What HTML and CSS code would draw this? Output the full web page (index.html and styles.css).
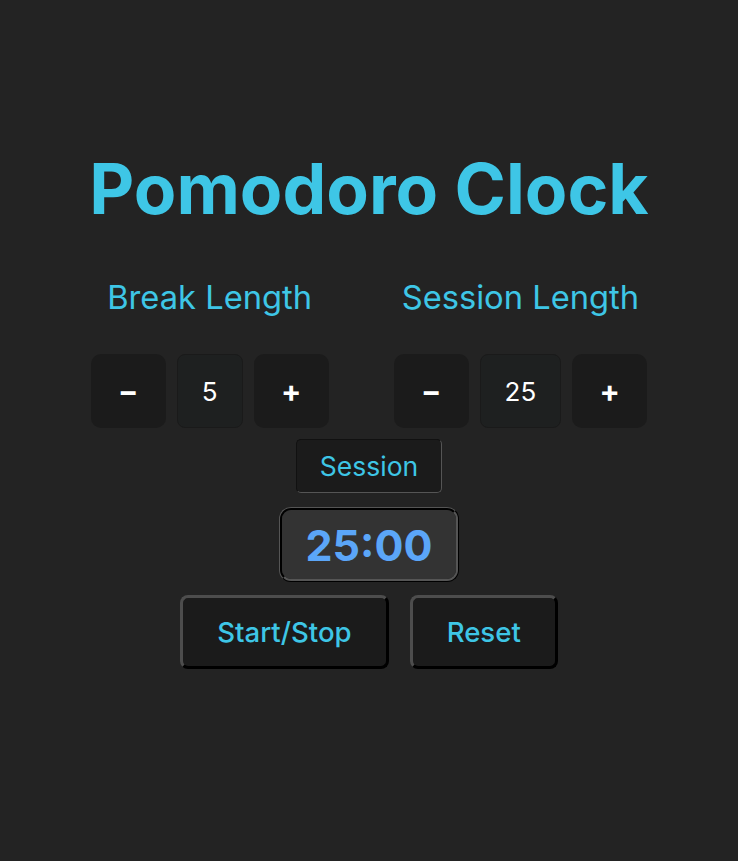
FILE: index.html
```html
<!DOCTYPE html>
<html lang="en">
<head>
<meta charset="utf-8">
<title>Pomodoro Clock</title>
<link rel="stylesheet" href="styles.css">
</head>
<body>
<main class="app">
  <h1 class="title">Pomodoro Clock</h1>
  <section class="settings">
    <div class="setting">
      <h2 class="setting-label">Break Length</h2>
      <div class="controls">
        <button class="step">&minus;</button>
        <div class="value">5</div>
        <button class="step">+</button>
      </div>
    </div>
    <div class="setting">
      <h2 class="setting-label">Session Length</h2>
      <div class="controls">
        <button class="step">&minus;</button>
        <div class="value">25</div>
        <button class="step">+</button>
      </div>
    </div>
  </section>
  <div class="mode">Session</div>
  <div class="timer">25:00</div>
  <div class="actions">
    <button class="action">Start/Stop</button>
    <button class="action">Reset</button>
  </div>
</main>
</body>
</html>
```
FILE: styles.css
```css
html, body {
  margin: 0;
  padding: 0;
  background: #232323;
}
body {
  font-family: Inter, "Noto Sans", sans-serif;
  color: #3ec6e6;
}
.app {
  display: flex;
  flex-direction: column;
  align-items: center;
  padding-top: 145px;
}
.title {
  margin: 0;
  font-size: 69.5px;
  font-weight: 700;
  line-height: 88px;
  color: #3ec6e6;
}
.settings {
  display: flex;
  gap: 65px;
  margin-top: 44px;
}
.setting {
  display: flex;
  flex-direction: column;
  align-items: center;
}
.setting-label {
  margin: 0;
  font-size: 32.7px;
  font-weight: 400;
  line-height: 40px;
  color: #3ec6e6;
}
.controls {
  display: flex;
  gap: 11px;
  margin-top: 37px;
}
.step {
  width: 75px;
  height: 74px;
  border: none;
  border-radius: 10px;
  background: #1b1b1b;
  color: #fff;
  font-family: Inter, sans-serif;
  font-size: 30px;
  font-weight: 700;
  padding: 0;
}
.value {
  height: 72px;
  padding: 0 24px;
  border: 1px solid #1a1a1a;
  border-radius: 8px;
  background: #1e2020;
  color: #fff;
  font-size: 26px;
  display: flex;
  align-items: center;
  justify-content: center;
}
.mode {
  margin-top: 11px;
  height: 52px;
  padding: 0 23px;
  border: 1px solid;
  border-color: #111 #555 #555 #111;
  border-radius: 5px;
  background: #1b1b1b;
  font-size: 26.5px;
  display: flex;
  align-items: center;
}
.timer {
  margin-top: 14px;
  height: 69px;
  padding: 0 24px;
  border: 3px ridge #555;
  border-radius: 12px;
  background: #333;
  color: #5ba6f8;
  font-size: 43px;
  font-weight: 700;
  display: flex;
  align-items: center;
}
.actions {
  display: flex;
  gap: 21px;
  margin-top: 13px;
}
.action {
  height: 74px;
  padding: 0 34px;
  border: 3px solid;
  border-color: #4d4d4d #000 #000 #4d4d4d;
  border-radius: 8px;
  background: #1b1b1b;
  color: #3ec6e6;
  font-family: Inter, sans-serif;
  font-size: 27.6px;
  font-weight: 500;
}
```
